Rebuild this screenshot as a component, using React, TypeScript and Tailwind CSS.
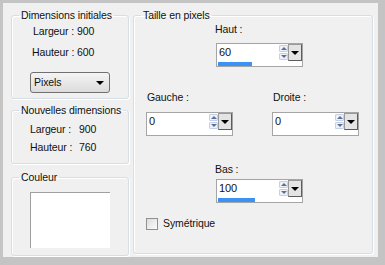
import type { ReactNode } from "react";

function Group({
  title,
  className,
  children,
}: {
  title: string;
  className: string;
  children?: ReactNode;
}) {
  return (
    <fieldset
      className={`rounded-[3px] border border-[#d5dfe5] shadow-[inset_1px_1px_0_#fff,1px_1px_0_#fff] ${className}`}
    >
      <legend className="ml-[7px] px-[2px] leading-[13px]">{title}</legend>
      {children}
    </fieldset>
  );
}

function Spin({ value, bar }: { value: string; bar: number }) {
  return (
    <div className="flex h-[24px] w-[87px] flex-col border border-[#a5a5a5] bg-white">
      <div className="flex h-[17px]">
        <div className="flex-1 pl-[2px] text-[11px] leading-[17px]">{value}</div>
        <div className="flex w-[9px] flex-col gap-[1px] py-[1px]">
          <div className="flex h-[7px] items-center justify-center rounded-[1px] border border-[#c5d0e4] bg-[#eef2f8]">
            <div className="h-0 w-0 border-x-[3px] border-b-[3px] border-x-transparent border-b-[#5a6f9c]" />
          </div>
          <div className="flex h-[7px] items-center justify-center rounded-[1px] border border-[#c5d0e4] bg-[#eef2f8]">
            <div className="h-0 w-0 border-x-[3px] border-t-[3px] border-x-transparent border-t-[#5a6f9c]" />
          </div>
        </div>
        <div className="flex w-[14px] items-center justify-center border border-[#5c5c5c] border-t-[#9a9a9a] border-l-[#9a9a9a] bg-[#e4e4e4]">
          <div className="h-0 w-0 border-x-[4px] border-t-[4px] border-x-transparent border-t-black" />
        </div>
      </div>
      <div className="h-[5px] pl-[1px] pt-[1px]">
        {bar > 0 && <div className="h-[4px] bg-[#3a93f2]" style={{ width: bar }} />}
      </div>
    </div>
  );
}

export default function App() {
  return (
    <div className="h-[265px] w-[385px] bg-[#c4c4c4] pl-[3px] pt-[3px] font-['Liberation_Sans',Arial,sans-serif] text-[10.5px] leading-[13px] tracking-[-0.1px] text-[#111]">
      <div className="flex h-[254px] w-[375px] bg-[#f0f0f0] pl-[8px] pt-[6px]">
        <div className="flex w-[118px] flex-col">
          <Group title="Dimensions initiales" className="h-[90px]">
            <div className="ml-[21px] mt-[3px]">Largeur : 900</div>
            <div className="ml-[20px] mt-[8px]">Hauteur : 600</div>
            <div className="ml-[18px] mt-[13px] flex h-[21px] w-[80px] items-center justify-between rounded-[3px] border border-[#707070] bg-gradient-to-b from-[#f4f4f4] to-[#dcdcdc] pl-[3px] pr-[5px]">
              <span>Pixels</span>
              <div className="h-0 w-0 border-x-[4px] border-t-[4px] border-x-transparent border-t-black" />
            </div>
          </Group>
          <Group title="Nouvelles dimensions" className="mt-[5px] h-[60px]">
            <div className="ml-[18px] mt-[6px] grid grid-cols-[49px_auto] gap-y-[5px]">
              <span>Largeur :</span>
              <span>900</span>
              <span>Hauteur :</span>
              <span>760</span>
            </div>
          </Group>
          <Group title="Couleur" className="mt-[7px] h-[85px]">
            <div className="ml-[18px] mt-[8px] h-[56px] w-[80px] border-l border-t border-[#a0a0a0] bg-white" />
          </Group>
        </div>
        <Group title="Taille en pixels" className="ml-[4px] h-[245px] w-[240px]">
          <div className="ml-[81px] mt-[1px]">Haut :</div>
          <div className="ml-[82px] mt-[7px]">
            <Spin value="60" bar={34} />
          </div>
          <div className="mt-[24px] flex">
            <div className="ml-[12px]">
              <div className="ml-[1px]">Gauche :</div>
              <div className="mt-[8px]">
                <Spin value="0" bar={0} />
              </div>
            </div>
            <div className="ml-[39px]">
              <div className="ml-[1px]">Droite :</div>
              <div className="mt-[8px]">
                <Spin value="0" bar={0} />
              </div>
            </div>
          </div>
          <div className="ml-[81px] mt-[27px]">Bas :</div>
          <div className="ml-[82px] mt-[3px]">
            <Spin value="100" bar={37} />
          </div>
          <label className="ml-[12px] mt-[14px] flex items-center gap-[5px]">
            <span className="h-[12px] w-[12px] border border-[#8e8f8f] bg-gradient-to-br from-[#dcdcdc] to-[#fbfbfb]" />
            <span>Symétrique</span>
          </label>
        </Group>
      </div>
    </div>
  );
}
